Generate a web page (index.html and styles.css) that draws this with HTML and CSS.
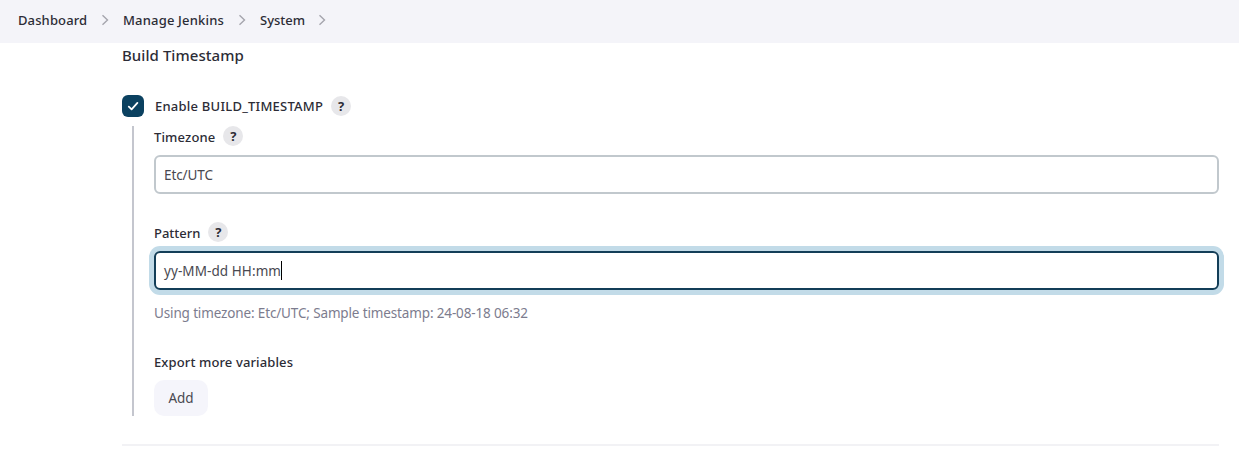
FILE: index.html
```
<!DOCTYPE html>
<html lang="en">
<head>
<meta charset="utf-8">
<title>System - Jenkins</title>
<link rel="stylesheet" href="styles.css">
</head>
<body>
<nav class="crumbs">
  <span class="crumb crumb-dash">Dashboard</span>
  <svg class="chev" viewBox="0 0 8 12"><path d="M1.5 1.2 6.5 6l-5 4.8"/></svg>
  <span class="crumb crumb-manage">Manage Jenkins</span>
  <svg class="chev" viewBox="0 0 8 12"><path d="M1.5 1.2 6.5 6l-5 4.8"/></svg>
  <span class="crumb crumb-system">System</span>
  <svg class="chev" viewBox="0 0 8 12"><path d="M1.5 1.2 6.5 6l-5 4.8"/></svg>
</nav>
<main class="section">
  <h2 class="title"><span class="t-title">Build Timestamp</span></h2>
  <div class="check-row">
    <span class="checkbox"><svg viewBox="0 0 22 22"><path d="M6.8 11.6 9.6 14.3 15.4 7.9"/></svg></span>
    <span class="label t-enable">Enable BUILD_TIMESTAMP</span>
    <span class="help">?</span>
  </div>
  <div class="nested">
    <div class="label-row"><span class="label t-zone">Timezone</span><span class="help">?</span></div>
    <div class="input"><span class="t-utc">Etc/UTC</span></div>
    <div class="label-row second"><span class="label t-pattern">Pattern</span><span class="help">?</span></div>
    <div class="input focused"><span class="t-value">yy-MM-dd HH:mm</span><i class="caret"></i></div>
    <div class="hint"><span class="t-hint">Using timezone: Etc/UTC; Sample timestamp: 24-08-18 06:32</span></div>
    <div class="label-row export"><span class="label t-export">Export more variables</span></div>
    <button class="add"><span class="t-add">Add</span></button>
  </div>
</main>
</body>
</html>
```
FILE: styles.css
```
* { box-sizing: border-box; }
body {
  margin: 0;
  height: 450px;
  overflow: hidden;
  background: #fff;
  color: #2c2c36;
  font: 400 13.5px/20px "Noto Sans", "Open Sans", sans-serif;
}
span { white-space: nowrap; }
.crumbs {
  display: flex;
  align-items: center;
  height: 43px;
  padding: 0 0 3px 18px;
  background: #f4f4f9;
  font-size: 13px;
  font-weight: 500;
}
.crumb-dash { width: 70px; letter-spacing: 0.12px; }
.crumb-manage { width: 102px; letter-spacing: 0.18px; }
.crumb-system { width: 45px; }
.chev {
  width: 8px;
  height: 12px;
  margin: 0 14px 0 13px;
  fill: none;
  stroke: #a5a5ad;
  stroke-width: 1.4;
}
.section {
  height: 403px;
  margin: 0 20px 0 122px;
  border-bottom: 2px solid #f2f2f5;
}
.title {
  margin: 0;
  padding-top: 2px;
  height: 52px;
  font-size: 15px;
  font-weight: 500;
}
.t-title { letter-spacing: 0.06px; }
.check-row { display: flex; align-items: center; height: 22px; }
.checkbox {
  width: 22px;
  height: 22px;
  margin-right: 11px;
  border-radius: 6px;
  background: #0b4160;
}
.checkbox svg {
  display: block;
  fill: none;
  stroke: #fff;
  stroke-width: 1.8;
  stroke-linecap: round;
  stroke-linejoin: round;
}
.label { font-size: 13px; font-weight: 500; }
.t-enable { letter-spacing: 0.23px; }
.t-zone { letter-spacing: 0.15px; }
.t-export { letter-spacing: 0.12px; }
.help {
  width: 20px;
  height: 20px;
  margin-left: 8px;
  border-radius: 50%;
  background: #e7e7ea;
  font-size: 13px;
  font-weight: 700;
  text-align: center;
}
.nested {
  margin: 9px 0 0 10px;
  height: 290px;
  padding-left: 20px;
  border-left: 2px solid #c4c6ce;
}
.label-row { display: flex; align-items: center; height: 20px; }
.label-row .label { padding-top: 2px; }
.second { margin-top: 28px; }
.input {
  display: flex;
  align-items: center;
  height: 39px;
  margin-top: 9px;
  padding-left: 8px;
  border: 2px solid #c1c8cd;
  border-radius: 6px;
  color: #484850;
}
.t-utc { letter-spacing: -0.1px; }
.t-value { letter-spacing: 0.08px; }
.focused {
  border-color: #133e58;
  box-shadow: 0 0 0 5px #c2dbe8;
}
.caret { width: 1px; height: 19px; background: #000; }
.hint { margin-top: 13px; color: #7c7c8e; letter-spacing: -0.14px; }
.export { margin-top: 28px; }
.add {
  display: block;
  width: 54px;
  height: 36px;
  margin-top: 9px;
  padding: 0;
  border: 0;
  border-radius: 10px;
  background: #f5f5fb;
  color: #484850;
  font: inherit;
}
```
